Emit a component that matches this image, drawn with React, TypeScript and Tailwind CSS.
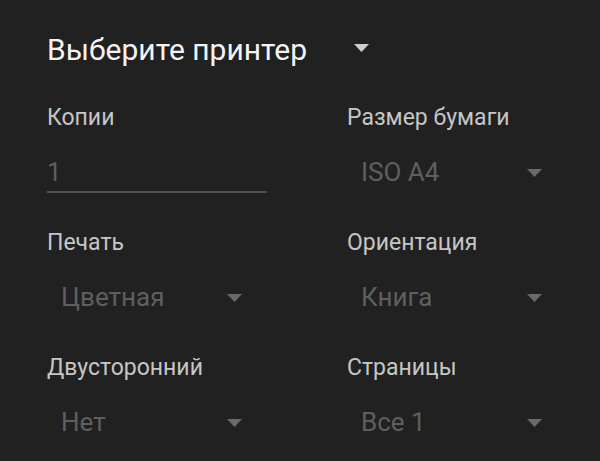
const FIELDS: { label: string; value: string; kind: "input" | "select" }[] = [
  { label: "Копии", value: "1", kind: "input" },
  { label: "Размер бумаги", value: "ISO A4", kind: "select" },
  { label: "Печать", value: "Цветная", kind: "select" },
  { label: "Ориентация", value: "Книга", kind: "select" },
  { label: "Двусторонний", value: "Нет", kind: "select" },
  { label: "Страницы", value: "Все 1", kind: "select" },
];

function Caret({ className }: { className: string }) {
  return (
    <svg width="15" height="8" viewBox="0 0 15 8" className={className}>
      <path d="M0 0h15L7.5 8z" fill="currentColor" />
    </svg>
  );
}

export default function App() {
  return (
    <div
      className="h-[461px] w-[600px] overflow-hidden bg-[#212121] pl-[47px] pt-[30px]"
      style={{ fontFamily: "Roboto, 'Noto Sans', sans-serif" }}
    >
      <div className="flex h-[40px] items-center">
        <span className="text-[30px] leading-[40px] text-[#f4f4f4]">
          Выберите принтер
        </span>
        <Caret className="mb-[5px] ml-[47px] text-[#cfcfcf]" />
      </div>

      <div className="mt-[34px] grid grid-cols-[300px_220px] gap-y-[36px]">
        {FIELDS.map((field) => (
          <div key={field.label}>
            <p className="h-[28px] text-[23px] leading-[28px] text-[#c6c6c6]">
              {field.label}
            </p>
            {field.kind === "input" ? (
              <div className="mt-[23px] h-[38px] w-[220px] border-b-2 border-[#4e4e4e] text-[26px] leading-[34px] text-[#5f5f5f]">
                {field.value}
              </div>
            ) : (
              <div className="mt-[23px] flex h-[38px] w-[220px] items-start justify-between pl-[14px] pr-[25px]">
                <span className="text-[26px] leading-[34px] text-[#5f5f5f]">
                  {field.value}
                </span>
                <Caret className="mt-[14px] text-[#6a6a6a]" />
              </div>
            )}
          </div>
        ))}
      </div>
    </div>
  );
}
